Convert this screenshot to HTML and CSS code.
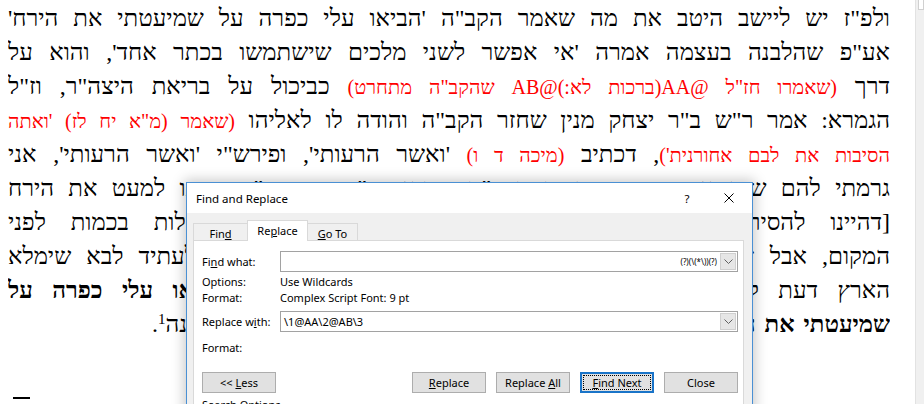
FILE: index.html
```html
<!DOCTYPE html>
<html lang="he">
<head>
<meta charset="utf-8">
<title>Find and Replace</title>
<link rel="stylesheet" href="styles.css">
</head>
<body>
<div class="app">
  <div class="page" dir="rtl">
    <div class="ln">ולפ"ז יש ליישב היטב את מה שאמר הקב"ה 'הביאו עלי כפרה על שמיעטתי את הירח'</div>
    <div class="ln">אע"פ שהלבנה בעצמה אמרה 'אי אפשר לשני מלכים שישתמשו בכתר אחד', והוא על</div>
    <div class="ln">דרך <span class="src">(שאמרו חז"ל @AA(ברכות לא:)@AB שהקב"ה מתחרט)</span> כביכול על בריאת היצה"ר, וז"ל</div>
    <div class="ln">הגמרא: אמר ר"ש ב"ר יצחק מנין שחזר הקב"ה והודה לו לאליהו <span class="src">(שאמר (מ"א יח לז) 'ואתה</span></div>
    <div class="ln"><span class="src">הסיבות את לבם אחורנית')</span>, דכתיב <span class="src">(מיכה ד ו)</span> 'ואשר הרעותי', ופירש"י 'ואשר הרעותי', אני</div>
    <div class="ln">גרמתי להם שיחטאו, וכמו כן הודה הקב"ה שהוא ית"ש גרם ע"י גזירתו למעט את הירח</div>
    <div class="ln">[דהיינו להסיר את הקטרוג שלא יהיו שני המאורות שוים בגדילות בכמות לפני</div>
    <div class="ln">המקום, אבל זהו רק בזמן הזה שהלבנה חסרה ומקבלת אורה, אולם לעתיד לבא שימלא</div>
    <div class="ln">הארץ דעת להשם כמים לים מכסים, אז יתקיים מה שאמר <b>'הביאו עלי כפרה על</b></div>
    <div class="ln last"><b>שמיעטתי את הירח'</b>, ויתמלא אור הלבנה כאור החמה ותחזור לקדמותה הלבנה<sup class="fnref">1</sup>.</div>
    <div class="ln"></div>
    <div class="fn-sep"></div>
  </div>
  <div class="scroll"><div class="scroll-btn"></div></div>
</div>

<div class="dialog">
  <div class="titlebar">
    <span class="title">Find and Replace</span>
    <span class="help">?</span>
    <svg class="close" width="10" height="10" viewBox="0 0 10 10"><path d="M0.5 0.5 L9.5 9.5 M9.5 0.5 L0.5 9.5" stroke="#000" stroke-width="1" fill="none"/></svg>
  </div>
  <div class="dbody">
    <div class="tabs">
      <div class="tab t-find"><span>Fin<u>d</u></span></div>
      <div class="tab t-rep sel"><span>Re<u>p</u>lace</span></div>
      <div class="tab t-go"><span><u>G</u>o To</span></div>
    </div>
    <div class="panel">
      <div class="row r-input">
        <div class="lbl">Fi<u>n</u>d what:</div>
        <div class="combo">
          <div class="ctext rtl-text">(?)(\(*\))(?)</div>
          <div class="dd"><svg width="9" height="5" viewBox="0 0 9 5"><path d="M0.5 0.5 L4.5 4.5 L8.5 0.5" stroke="#606060" fill="none"/></svg></div>
        </div>
      </div>
      <div class="row r-info r-opt">
        <div class="lbl">Options:</div>
        <div>Use Wildcards</div>
      </div>
      <div class="row r-info">
        <div class="lbl">Format:</div>
        <div>Complex Script Font: 9 pt</div>
      </div>
      <div class="row r-input r-rep">
        <div class="lbl">Replace w<u>i</u>th:</div>
        <div class="combo">
          <div class="ctext">\1@AA\2@AB\3</div>
          <div class="dd"><svg width="9" height="5" viewBox="0 0 9 5"><path d="M0.5 0.5 L4.5 4.5 L8.5 0.5" stroke="#606060" fill="none"/></svg></div>
        </div>
      </div>
      <div class="row r-info r-fmt2">
        <div class="lbl">Format:</div>
      </div>
      <div class="buttons">
        <div class="btn"><span>&lt;&lt; <u>L</u>ess</span></div>
        <div class="spacer"></div>
        <div class="btn"><span><u>R</u>eplace</span></div>
        <div class="btn"><span>Replace <u>A</u>ll</span></div>
        <div class="btn focus"><span class="focusring"><span><u>F</u>ind Next</span></span></div>
        <div class="btn"><span>Close</span></div>
      </div>
      <div class="search">
        <span>Search Options</span>
        <span class="sline"></span>
      </div>
    </div>
  </div>
</div>
</body>
</html>
```

FILE: styles.css
```css
html, body {
  margin: 0;
  padding: 0;
}
body {
  width: 924px;
  height: 404px;
  overflow: hidden;
  background: #fff;
  position: relative;
}
.app {
  display: flex;
  height: 404px;
}
.page {
  flex: none;
  width: 882px;
  padding: 1px 25px 0 8px;
  background: #fff;
  font-family: "Liberation Serif", "Times New Roman", serif;
  font-size: 24px;
  color: #000;
}
.ln {
  height: 34px;
  line-height: 34px;
  overflow: hidden;
  text-align: justify;
  text-align-last: justify;
}
.ln.last {
  padding-left: 144px;
}
.src {
  color: #f00;
  font-size: 20px;
}
.fnref {
  font-size: 15px;
  line-height: 0;
  vertical-align: 8px;
}
.fn-sep {
  width: 17px;
  height: 2px;
  background: #000;
  margin-top: 22px;
  margin-left: 5px;
  margin-right: auto;
}
.scroll {
  flex: 1;
  background: #f0f0f0;
  border-left: 1px solid #e2e2e2;
}
.scroll-btn {
  height: 9px;
  margin-left: 2px;
  background: #fff;
  border: 1px solid #d0d0d0;
  border-top: none;
}

/* Dialog window */
.dialog {
  position: absolute;
  left: 186px;
  top: 182px;
  width: 565px;
  height: 240px;
  border: 1px solid #4a90d4;
  background: #f0f0f0;
  box-shadow: 0 0 12px 2px rgba(0, 0, 0, 0.22);
  font-family: "Noto Sans", "Open Sans", sans-serif;
  font-size: 11px;
  color: #000;
  display: flex;
  flex-direction: column;
}
.titlebar {
  height: 30px;
  background: #fff;
  display: flex;
  align-items: center;
  padding-left: 9px;
  flex: none;
  font-size: 11.5px;
}
.title {
  flex: 1;
}
.help {
  width: 12px;
  text-align: center;
  margin-right: 31px;
}
.close {
  margin-right: 18px;
}
.dbody {
  flex: 1;
  padding: 7px 8px 0 6px;
  display: flex;
  flex-direction: column;
}
.tabs {
  display: flex;
  align-items: flex-end;
  height: 21px;
  margin-bottom: -1px;
  position: relative;
  z-index: 1;
}
.tab {
  box-sizing: border-box;
  height: 17px;
  margin-bottom: 1px;
  border: 1px solid #d9d9d9;
  border-bottom: none;
  background: #f0f0f0;
  display: flex;
  align-items: center;
  justify-content: center;
  padding-top: 2px;
}
.tab.sel {
  height: 21px;
  margin-bottom: 0;
  background: #fff;
  padding-top: 0;
  padding-bottom: 2px;
}
.t-find { width: 54px; border-right: none; }
.t-rep { width: 61px; }
.t-go { width: 50px; border-left: none; }
.panel {
  flex: 1;
  background: #fff;
  border: 1px solid #d9d9d9;
  padding: 10px 5px 0 8px;
  display: flex;
  flex-direction: column;
}
.row {
  display: flex;
  align-items: center;
}
.lbl {
  width: 78px;
  flex: none;
}
.row.r-input {
  height: 21px;
}
.row.r-info {
  height: 16px;
}
.row.r-opt {
  margin-top: 1px;
}
.row.r-rep {
  margin-top: 6px;
}
.row.r-fmt2 {
  margin-top: 7px;
}
.combo {
  flex: 1;
  box-sizing: border-box;
  height: 21px;
  border: 1px solid #a2a2a2;
  background: #fff;
  display: flex;
  align-items: center;
}
.ctext {
  flex: 1;
  padding-left: 3px;
  white-space: nowrap;
}
.ctext.rtl-text {
  text-align: right;
  font-size: 8px;
  padding-right: 3px;
  padding-left: 0;
}
.dd {
  box-sizing: border-box;
  width: 16px;
  height: 17px;
  margin-right: 1px;
  background: #e6e6e6;
  border: 1px solid #cfcfcf;
  display: flex;
  align-items: center;
  justify-content: center;
}
.buttons {
  display: flex;
  gap: 10px;
  margin-top: 17px;
  height: 21px;
}
.spacer {
  flex: 1;
}
.btn {
  box-sizing: border-box;
  width: 74px;
  height: 21px;
  border: 1px solid #adadad;
  background: #e1e1e1;
  display: flex;
  align-items: center;
  justify-content: center;
  white-space: nowrap;
}
.btn.focus {
  border: 2px solid #1a74c8;
  padding: 1px;
}
.focusring {
  flex: 1;
  align-self: stretch;
  border: 1px dotted #000;
  display: flex;
  align-items: center;
  justify-content: center;
}
.search {
  margin-top: 3px;
  display: flex;
  align-items: center;
  gap: 6px;
  height: 16px;
}
.sline {
  flex: 1;
  border-top: 1px solid #dcdcdc;
}
```
